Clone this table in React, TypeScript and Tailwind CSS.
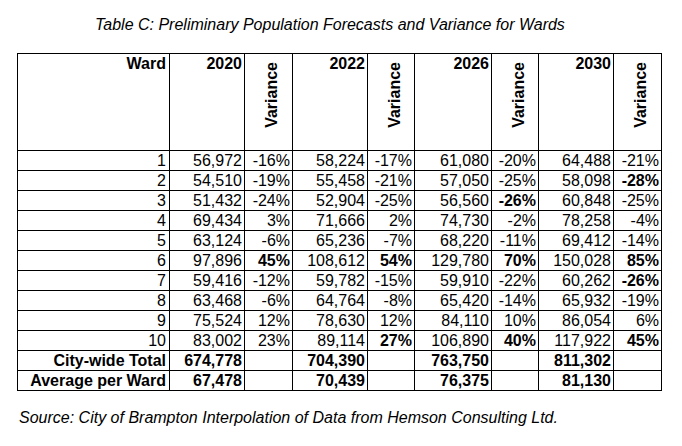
const rows: [string, string, string, string, string, string, string, string, string][] = [
  ['1', '56,972', '-16%', '58,224', '-17%', '61,080', '-20%', '64,488', '-21%'],
  ['2', '54,510', '-19%', '55,458', '-21%', '57,050', '-25%', '58,098', '-28%*'],
  ['3', '51,432', '-24%', '52,904', '-25%', '56,560', '-26%*', '60,848', '-25%'],
  ['4', '69,434', '3%', '71,666', '2%', '74,730', '-2%', '78,258', '-4%'],
  ['5', '63,124', '-6%', '65,236', '-7%', '68,220', '-11%', '69,412', '-14%'],
  ['6', '97,896', '45%*', '108,612', '54%*', '129,780', '70%*', '150,028', '85%*'],
  ['7', '59,416', '-12%', '59,782', '-15%', '59,910', '-22%', '60,262', '-26%*'],
  ['8', '63,468', '-6%', '64,764', '-8%', '65,420', '-14%', '65,932', '-19%'],
  ['9', '75,524', '12%', '78,630', '12%', '84,110', '10%', '86,054', '6%'],
  ['10', '83,002', '23%', '89,114', '27%*', '106,890', '40%*', '117,922', '45%*'],
];

const totals: [string, string[]][] = [
  ['City-wide Total', ['674,778', '704,390', '763,750', '811,302']],
  ['Average per Ward', ['67,478', '70,439', '76,375', '81,130']],
];

const widths = [152, 75, 48, 75, 47, 77, 47, 75, 48];
const years = ['2020', '2022', '2026', '2030'];

function VarianceHead() {
  return (
    <th className="border border-black p-0 align-top">
      <div className="flex justify-center pt-[8px] pl-[7px]">
        <span className="[writing-mode:vertical-rl] rotate-180 leading-[20px] font-bold">Variance</span>
      </div>
    </th>
  );
}

function Cell({ value }: { value: string }) {
  const bold = value.endsWith('*');
  return (
    <td className={`border border-black p-0 pr-[2px] text-right h-[20px] leading-[18px] ${bold ? 'font-bold' : ''}`}>
      {bold ? value.slice(0, -1) : value}
    </td>
  );
}

export default function App() {
  return (
    <div className="w-[682px] h-[446px] bg-white text-black text-[16px] font-['Liberation_Sans',Arial,sans-serif]">
      <p className="pt-[15px] pl-[95px] italic text-[16px] leading-[20px]">
        Table C: Preliminary Population Forecasts and Variance for Wards
      </p>
      <table className="ml-[17px] mt-[18px] border-collapse table-fixed w-[645px]">
        <colgroup>
          {widths.map((w, i) => (
            <col key={i} style={{ width: w }} />
          ))}
        </colgroup>
        <thead>
          <tr className="h-[97px]">
            <th className="border border-black p-0 pr-[3px] align-top text-right font-bold leading-[20px]">Ward</th>
            {years.map((y) => (
              <>
                <th key={y} className="border border-black p-0 pr-[2px] align-top text-right font-bold leading-[20px]">
                  {y}
                </th>
                <VarianceHead key={y + 'v'} />
              </>
            ))}
          </tr>
        </thead>
        <tbody>
          {rows.map((r) => (
            <tr key={r[0]} className="h-[20px]">
              <td className="border border-black p-0 pr-[3px] text-right h-[20px] leading-[18px]">{r[0]}</td>
              {r.slice(1).map((v, i) => (
                <Cell key={i} value={v} />
              ))}
            </tr>
          ))}
          {totals.map(([label, vals]) => (
            <tr key={label} className="h-[20px] font-bold">
              <td className="border border-black p-0 pr-[3px] text-right h-[20px] leading-[18px]">{label}</td>
              {vals.map((v) => (
                <>
                  <td key={v} className="border border-black p-0 pr-[2px] text-right leading-[18px]">{v}</td>
                  <td key={v + 'e'} className="border border-black p-0"></td>
                </>
              ))}
            </tr>
          ))}
        </tbody>
      </table>
      <p className="pt-[17px] pl-[19px] italic text-[16px] leading-[20px]">
        Source: City of Brampton Interpolation of Data from Hemson Consulting Ltd.
      </p>
    </div>
  );
}
